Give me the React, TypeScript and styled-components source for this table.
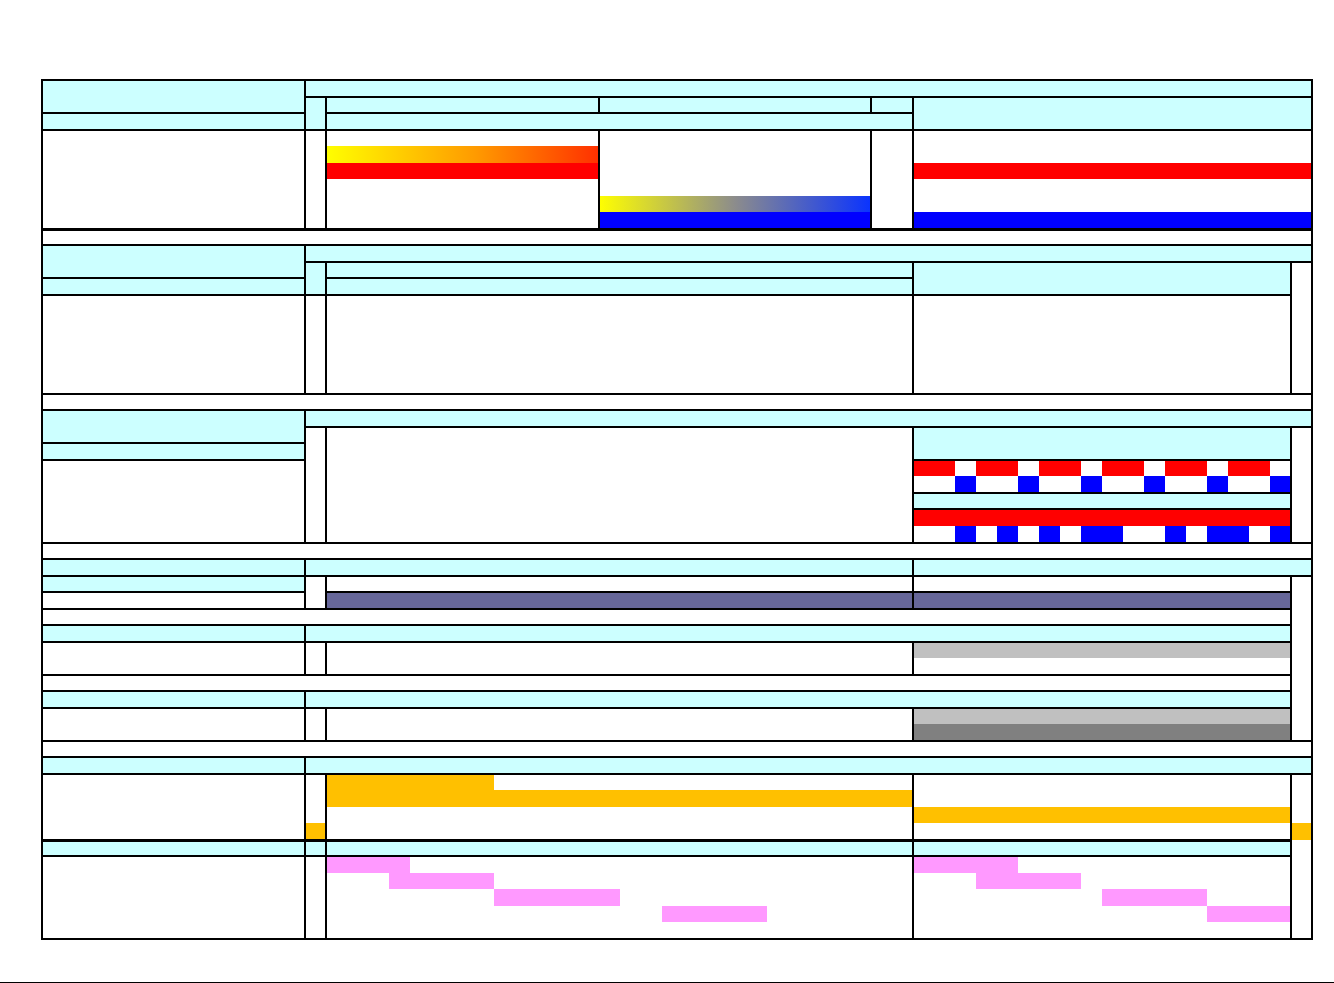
import styled, { createGlobalStyle } from 'styled-components';

const GlobalStyle = createGlobalStyle`
  html, body {
    margin: 0;
    padding: 0;
    background: #fff;
  }
  body {
    font-family: "Liberation Sans", Arial, sans-serif;
  }
`;

const Page = styled.div`
  width: 1334px;
  height: 983px;
  display: flex;
  flex-direction: column;
  overflow: hidden;
`;

const SheetArea = styled.div`
  padding: 79px 0 0 41px;
`;

const Sheet = styled.div`
  box-sizing: border-box;
  width: 1272px;
  height: 861px;
  border: 1px solid #000;
  display: grid;
  grid-template-columns: 263px repeat(48, 1fr);
  grid-template-rows: repeat(52, 1fr);
`;

const Cell = styled.div<{ $rows: string; $cols: string; $fill?: string; $heavyTop?: boolean }>`
  box-sizing: border-box;
  grid-row: ${(p) => p.$rows};
  grid-column: ${(p) => p.$cols};
  border: 1px solid #000;
  border-top-width: ${(p) => (p.$heavyTop ? '2px' : '1px')};
  background: ${(p) => p.$fill ?? 'transparent'};
`;

const Bar = styled.div<{ $row: number; $cols: string; $paint: string }>`
  grid-row: ${(p) => p.$row};
  grid-column: ${(p) => p.$cols};
  background: ${(p) => p.$paint};
`;

const PageRule = styled.div`
  margin-top: 42px;
  height: 2px;
  background: #000;
`;

const cyan = '#ccffff';
const navy = '#666699';
const red = '#ff0000';
const blue = '#0000ff';
const orange = '#ffc000';
const pink = '#ff99ff';
const silver = '#c0c0c0';
const gray = '#808080';
const warm = 'linear-gradient(to right, #ffff00, #ff9a00 55%, #ff3000)';
const cool = 'linear-gradient(to right, #ffff00, #8c8c8c 50%, #0a33ff)';

type CellDef = [number, number, number, number, string?];

// [firstRow, lastRow, fromColLine, toColLine, fill]
const cells: CellDef[] = [
  // block 1
  [1, 2, 1, 2, cyan],
  [3, 3, 1, 2, cyan],
  [4, 9, 1, 2],
  [1, 1, 2, 50, cyan],
  [2, 3, 2, 3, cyan],
  [2, 2, 3, 16, cyan],
  [2, 2, 16, 29, cyan],
  [2, 2, 29, 31, cyan],
  [3, 3, 3, 31, cyan],
  [2, 3, 31, 50, cyan],
  [4, 9, 2, 3],
  [4, 9, 3, 16],
  [4, 9, 16, 29],
  [4, 9, 29, 31],
  [4, 9, 31, 50],
  // block 2
  [10, 10, 1, 50],
  [11, 12, 1, 2, cyan],
  [13, 13, 1, 2, cyan],
  [11, 11, 2, 50, cyan],
  [12, 13, 2, 3, cyan],
  [12, 12, 3, 31, cyan],
  [13, 13, 3, 31, cyan],
  [12, 13, 31, 49, cyan],
  [12, 19, 49, 50],
  [14, 19, 1, 2],
  [14, 19, 2, 3],
  [14, 19, 3, 31],
  [14, 19, 31, 49],
  [20, 20, 1, 50],
  // block 3
  [21, 22, 1, 2, cyan],
  [23, 23, 1, 2, cyan],
  [24, 28, 1, 2],
  [21, 21, 2, 50, cyan],
  [22, 28, 2, 3],
  [22, 28, 3, 31],
  [22, 23, 31, 49, cyan],
  [24, 25, 31, 49],
  [26, 26, 31, 49, cyan],
  [27, 28, 31, 49],
  [22, 28, 49, 50],
  [29, 29, 1, 50],
  // block 4
  [30, 30, 1, 2, cyan],
  [30, 30, 2, 31, cyan],
  [30, 30, 31, 50, cyan],
  [31, 31, 1, 2, cyan],
  [32, 32, 1, 2],
  [31, 32, 2, 3],
  [31, 31, 3, 31],
  [32, 32, 3, 31, navy],
  [31, 31, 31, 49],
  [32, 32, 31, 49, navy],
  [31, 40, 49, 50],
  [33, 33, 1, 49],
  [34, 34, 1, 2, cyan],
  [34, 34, 2, 49, cyan],
  [35, 36, 1, 2],
  [35, 36, 2, 3],
  [35, 36, 3, 31],
  [35, 36, 31, 49],
  [37, 37, 1, 49],
  [38, 38, 1, 2, cyan],
  [38, 38, 2, 49, cyan],
  [39, 40, 1, 2],
  [39, 40, 2, 3],
  [39, 40, 3, 31],
  [39, 40, 31, 49],
  [41, 41, 1, 50],
  // block 5
  [42, 42, 1, 2, cyan],
  [42, 42, 2, 50, cyan],
  [43, 46, 1, 2],
  [43, 46, 2, 3],
  [43, 46, 3, 31],
  [43, 46, 31, 49],
  [43, 52, 49, 50],
  [47, 47, 1, 2, cyan],
  [47, 47, 2, 3, cyan],
  [47, 47, 3, 31, cyan],
  [47, 47, 31, 49, cyan],
  [48, 52, 1, 2],
  [48, 52, 2, 3],
  [48, 52, 3, 31],
  [48, 52, 31, 49],
];

// rows whose top edge carries the heavier rule
const heavyRows = [10, 47];

type BarDef = [number, number, number, string];

// F column starts at grid line 31; units are counted from there
const inF = (row: number, runs: [number, number][], paint: string): BarDef[] =>
  runs.map(([a, b]) => [row, 31 + a, 31 + b, paint]);

const bars: BarDef[] = [
  [5, 3, 16, warm],
  [6, 3, 16, red],
  [8, 16, 29, cool],
  [9, 16, 29, blue],
  [6, 31, 50, red],
  [9, 31, 50, blue],
  ...inF(24, [[0, 2], [3, 5], [6, 8], [9, 11], [12, 14], [15, 17]], red),
  ...inF(25, [[2, 3], [5, 6], [8, 9], [11, 12], [14, 15], [17, 18]], blue),
  [27, 31, 49, red],
  ...inF(28, [[2, 3], [4, 5], [6, 7], [8, 10], [12, 13], [14, 16], [17, 18]], blue),
  [35, 31, 49, silver],
  [39, 31, 49, silver],
  [40, 31, 49, gray],
  [43, 3, 11, orange],
  [44, 3, 31, orange],
  [45, 31, 49, orange],
  [46, 2, 3, orange],
  [46, 49, 50, orange],
  [48, 3, 7, pink],
  [49, 6, 11, pink],
  [50, 11, 17, pink],
  [51, 19, 24, pink],
  [48, 31, 36, pink],
  [49, 34, 39, pink],
  [50, 40, 45, pink],
  [51, 45, 49, pink],
];

export default function App() {
  return (
    <Page>
      <GlobalStyle />
      <SheetArea>
        <Sheet>
          {bars.map(([row, from, to, paint], i) => (
            <Bar key={`bar${i}`} $row={row} $cols={`${from} / ${to}`} $paint={paint} />
          ))}
          {cells.map(([r1, r2, c1, c2, fill], i) => (
            <Cell
              key={`cell${i}`}
              $rows={`${r1} / ${r2 + 1}`}
              $cols={`${c1} / ${c2}`}
              $fill={fill}
              $heavyTop={heavyRows.includes(r1)}
            />
          ))}
        </Sheet>
      </SheetArea>
      <PageRule />
    </Page>
  );
}
